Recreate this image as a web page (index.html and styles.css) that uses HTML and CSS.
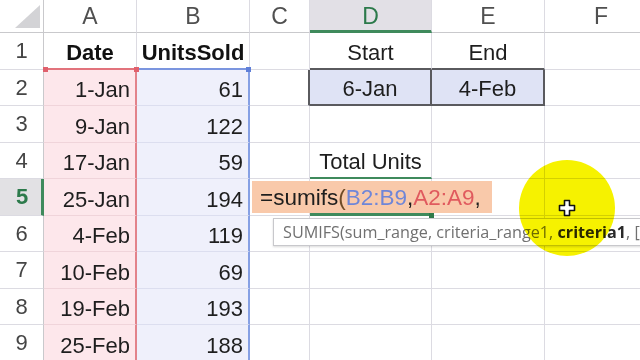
FILE: index.html
```html
<!DOCTYPE html>
<html>
<head>
<meta charset="utf-8">
<link rel="stylesheet" href="styles.css">
</head>
<body>
<div class="sheet">
  <div class="grid">
    <div class="cell corner"></div>
    <div class="cell colhead">A</div>
    <div class="cell colhead">B</div>
    <div class="cell colhead">C</div>
    <div class="cell colhead active-col">D</div>
    <div class="cell colhead">E</div>
    <div class="cell colhead">F</div>

    <div class="cell rowhead">1</div>
    <div class="cell bold center a-top">Date</div>
    <div class="cell bold center b-top">UnitsSold</div>
    <div class="cell"></div>
    <div class="cell center box-top">Start</div>
    <div class="cell center box-top">End</div>
    <div class="cell"></div>

    <div class="cell rowhead">2</div>
    <div class="cell right ra">1-Jan</div>
    <div class="cell right rb">61</div>
    <div class="cell box-left"></div>
    <div class="cell center crit">6-Jan</div>
    <div class="cell center crit">4-Feb</div>
    <div class="cell"></div>

    <div class="cell rowhead">3</div>
    <div class="cell right ra">9-Jan</div>
    <div class="cell right rb">122</div>
    <div class="cell"></div>
    <div class="cell"></div>
    <div class="cell"></div>
    <div class="cell"></div>

    <div class="cell rowhead">4</div>
    <div class="cell right ra">17-Jan</div>
    <div class="cell right rb">59</div>
    <div class="cell"></div>
    <div class="cell center act-top">Total Units</div>
    <div class="cell"></div>
    <div class="cell"></div>

    <div class="cell rowhead active-row">5</div>
    <div class="cell right ra">25-Jan</div>
    <div class="cell right rb">194</div>
    <div class="cell"></div>
    <div class="cell act-bottom"></div>
    <div class="cell"></div>
    <div class="cell"></div>

    <div class="cell rowhead">6</div>
    <div class="cell right ra">4-Feb</div>
    <div class="cell right rb">119</div>
    <div class="cell"></div>
    <div class="cell"></div>
    <div class="cell"></div>
    <div class="cell"></div>

    <div class="cell rowhead">7</div>
    <div class="cell right ra">10-Feb</div>
    <div class="cell right rb">69</div>
    <div class="cell"></div>
    <div class="cell"></div>
    <div class="cell"></div>
    <div class="cell"></div>

    <div class="cell rowhead">8</div>
    <div class="cell right ra">19-Feb</div>
    <div class="cell right rb">193</div>
    <div class="cell"></div>
    <div class="cell"></div>
    <div class="cell"></div>
    <div class="cell"></div>

    <div class="cell rowhead">9</div>
    <div class="cell right ra">25-Feb</div>
    <div class="cell right rb">188</div>
    <div class="cell"></div>
    <div class="cell"></div>
    <div class="cell"></div>
    <div class="cell"></div>
  </div>

  <span class="handle h-red h1"></span>
  <span class="handle h-red h2"></span>
  <span class="handle h-blue h3"></span>
  <span class="handle h-green h4"></span>

  <div class="editor">=sumifs<span class="paren">(</span><span class="ref-b">B2:B9</span>,<span class="ref-a">A2:A9</span>,</div>

  <div class="tip">SUMIFS(sum_range, criteria_range1, <b>criteria1</b>, [</div>

  <div class="spot"></div>
  <svg class="cursor" width="18" height="18" viewBox="0 0 18 18">
    <path d="M6.5 1.5h5v5h5v5h-5v5h-5v-5h-5v-5h5z" fill="#fff" stroke="#111" stroke-width="1.6" stroke-linejoin="round"/>
  </svg>
</div>
</body>
</html>
```

FILE: styles.css
```css
html, body {
  margin: 0;
  padding: 0;
  background: #ffffff;
  overflow: hidden;
}

.sheet {
  position: relative;
  width: 640px;
  height: 360px;
  overflow: hidden;
  font-family: "Liberation Sans", Arial, sans-serif;
  color: #1e1e1e;
}

.grid {
  display: grid;
  grid-template-columns: 44px 93px 113px 60px 122px 113px 113px;
  grid-template-rows: 33px repeat(9, 36.5px);
}

.cell {
  box-sizing: border-box;
  border-right: 1px solid #dcdbe2;
  border-bottom: 1px solid #dcdbe2;
  font-size: 22px;
  line-height: 25px;
  display: flex;
  align-items: flex-end;
  padding: 0 5px 3px 5px;
  white-space: nowrap;
  overflow: visible;
}

.center { justify-content: center; }
.right { justify-content: flex-end; }
.bold { font-weight: bold; color: #111; }

.corner {
  position: relative;
  border-bottom-color: #c9c9cc;
  border-right-color: #c9c9cc;
}
.corner::after {
  content: "";
  position: absolute;
  left: 15px;
  top: 5px;
  width: 25px;
  height: 23px;
  background: #d3d3d6;
  clip-path: polygon(100% 0, 100% 100%, 0 100%);
}

.colhead {
  justify-content: center;
  align-items: center;
  padding: 0;
  color: #505050;
  font-size: 23px;
  border-bottom-color: #c9c9cc;
}

.active-col {
  background: #e2e0e6;
  color: #2c7a4b;
  border-bottom: 3px solid #3f8a5c;
  padding-top: 3px;
}

.rowhead {
  justify-content: center;
  align-items: center;
  padding: 0;
  color: #454545;
  font-size: 22px;
  border-right-color: #c9c9cc;
}

.active-row {
  background: #e2e1e4;
  color: #2c7a4b;
  font-weight: bold;
  border-right: 3px solid #3f8a5c;
  padding-left: 3px;
}

.a-top { border-bottom: 2px solid #e2737c; }
.b-top { border-bottom: 2px solid #7b95df; }

.ra {
  background: #fde7eb;
  border-right: 2px solid #e2828a;
  border-bottom-color: #f0d4da;
}
.rb {
  background: #eff0fb;
  border-right: 2px solid #86a0e4;
  border-bottom-color: #dcdeef;
}

.box-top { border-bottom: 2px solid #5a5a5e; }
.box-left { border-right: 2px solid #5a5a5e; }
.crit {
  background: #dfe3f5;
  border-right: 2px solid #5a5a5e;
  border-bottom: 2px solid #5a5a5e;
}

.act-top { border-bottom: 2px solid #3f8a5c; }
.act-bottom { border-bottom: 3px solid #3f8a5c; }

.handle {
  position: absolute;
  width: 5px;
  height: 5px;
}
.h-red { background: #e0606c; }
.h-blue { background: #5f7fd8; }
.h-green { background: #2f7a4a; }
.h1 { left: 43px; top: 67px; }
.h2 { left: 134px; top: 67px; }
.h3 { left: 246px; top: 67px; }
.h4 { left: 429px; top: 213px; }

.editor {
  position: absolute;
  left: 252px;
  top: 181px;
  width: 240px;
  height: 32px;
  background: #f9c9aa;
  box-sizing: border-box;
  padding: 0 0 0 8px;
  font-size: 22.5px;
  line-height: 33px;
  color: #1e1e1e;
  white-space: nowrap;
}
.paren { color: #6e4a26; }
.ref-b { color: #6f86d8; }
.ref-a { color: #e05a5e; }

.tip {
  position: absolute;
  left: 273px;
  top: 218px;
  width: 380px;
  height: 28px;
  box-sizing: border-box;
  background: #ffffff;
  border: 1px solid #c8c8cc;
  box-shadow: 0 1px 2px rgba(0,0,0,0.15);
  padding: 0 0 0 9px;
  font-family: "Open Sans", "Noto Sans", sans-serif;
  font-size: 16.2px;
  line-height: 26px;
  color: #707070;
  white-space: nowrap;
  overflow: hidden;
}
.tip b { color: #2a2a2a; font-weight: bold; }

.spot {
  position: absolute;
  left: 519px;
  top: 160px;
  width: 96px;
  height: 96px;
  border-radius: 50%;
  background: #f6f200;
  mix-blend-mode: multiply;
}

.cursor {
  position: absolute;
  left: 558px;
  top: 199px;
}
```
